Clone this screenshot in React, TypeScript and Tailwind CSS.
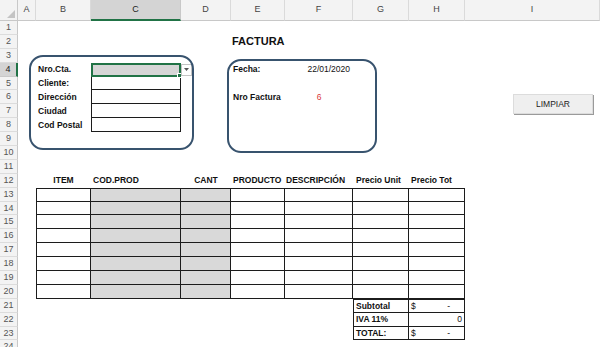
import React from 'react';

const COLS = ['A', 'B', 'C', 'D', 'E', 'F', 'G', 'H', 'I'];
const GRID = 'grid grid-cols-[18px_18px_55px_90px_50px_54px_68px_56px_56px_1fr]';

type Cell = { t?: React.ReactNode; c?: string };
type Row = Partial<Record<string, Cell>>;

const line = 'border-[#1c1c1c]';
const box = `border-r border-b ${line}`;
const gray = 'bg-[#d9d9d9]';

const sheet: Record<number, Row> = {
  2: { E: { t: 'FACTURA', c: 'text-[11px] font-bold pl-[1px]' } },
  4: {
    B: { t: 'Nro.Cta.', c: 'font-bold pl-[2px]' },
    E: { t: 'Fecha:', c: 'font-bold pl-[2px]' },
    F: { t: '22/01/2020', c: 'justify-end pr-[3px]' },
  },
  5: { B: { t: 'Cliente:', c: 'font-bold pl-[2px]' }, C: { c: `border-l ${box}` } },
  6: {
    B: { t: 'Dirección', c: 'font-bold pl-[2px]' },
    C: { c: `border-l ${box}` },
    E: { t: 'Nro Factura', c: 'font-bold pl-[2px]' },
    F: { t: '6', c: 'justify-center text-[#d9383a]' },
  },
  7: { B: { t: 'Ciudad', c: 'font-bold pl-[2px]' }, C: { c: `border-l ${box}` } },
  8: { B: { t: 'Cod Postal', c: 'font-bold pl-[2px]' }, C: { c: `border-l ${box}` } },
  12: {
    B: { t: 'ITEM', c: 'font-bold justify-center' },
    C: { t: 'COD.PROD', c: 'font-bold pl-[2px]' },
    D: { t: 'CANT', c: 'font-bold justify-center' },
    E: { t: 'PRODUCTO', c: 'font-bold pl-[2px]' },
    F: { t: 'DESCRIPCIÓN', c: 'font-bold pl-[1px]' },
    G: { t: 'Precio Unit', c: 'font-bold pl-[3px]' },
    H: { t: 'Precio Tot', c: 'font-bold pl-[2px]' },
  },
  21: {
    G: { t: 'Subtotal', c: `font-bold pl-[2px] border-l border-t ${box}` },
    H: { t: <><span>$</span><span className="pr-[14px]">-</span></>, c: `justify-between pl-[2px] border-t ${box}` },
  },
  22: {
    G: { t: 'IVA 11%', c: `font-bold pl-[2px] border-l ${box}` },
    H: { t: '0', c: `justify-end pr-[2px] ${box}` },
  },
  23: {
    G: { t: 'TOTAL:', c: `font-bold pl-[2px] border-l ${box}` },
    H: { t: <><span>$</span><span className="pr-[14px]">-</span></>, c: `justify-between pl-[2px] ${box}` },
  },
};

// product table rows 13-20
for (let r = 13; r <= 20; r++) {
  const top = r === 13 ? 'border-t' : '';
  sheet[r] = {
    B: { c: `border-l ${top} ${box}` },
    C: { c: `${top} ${box} ${gray}` },
    D: { c: `${top} ${box} ${gray}` },
    E: { c: `${top} ${box}` },
    F: { c: `${top} ${box}` },
    G: { c: `${top} ${box}` },
    H: { c: `${top} ${box}` },
  };
}

const SelectedCell: React.FC = () => (
  <div className="relative h-full border-2 border-[#217346] bg-[#d6d6d6]">
    <div className="absolute -right-[3px] -bottom-[3px] w-[5px] h-[5px] bg-[#217346] border border-white" />
    <div className="absolute -right-[13px] -top-[1px] w-[11px] h-[12px] bg-white border border-[#c4c4c4] flex items-center justify-center">
      <svg width="5" height="3" viewBox="0 0 5 3"><path d="M0 0h5L2.5 3z" fill="#555" /></svg>
    </div>
  </div>
);

export default function App() {
  const rows = Array.from({ length: 24 }, (_, i) => i + 1);
  return (
    <div className="relative w-[600px] h-[347px] overflow-hidden bg-white text-[#111] font-['Liberation_Sans',Arial,sans-serif]">
      {/* column headers */}
      <div className={`${GRID} h-[21px] bg-[#f3f3f3] text-[9px] text-[#444]`}>
        <div className="relative border-r border-b border-[#c8c8c8]">
          <svg className="absolute right-[2px] bottom-[2px]" width="8" height="8" viewBox="0 0 8 8">
            <path d="M8 0V8H0z" fill="#c4c4c4" />
          </svg>
        </div>
        {COLS.map((c) => (
          <div
            key={c}
            className={
              c === 'C'
                ? 'flex items-center justify-center bg-[#d4d4d4] border-r border-[#c8c8c8] border-b-2 border-b-[#217346] text-[#222]'
                : 'flex items-center justify-center border-r border-[#dadada] border-b border-b-[#c8c8c8]'
            }
          >
            {c}
          </div>
        ))}
      </div>

      {rows.map((r) => (
        <div key={r} className={`${GRID} h-[13.9px] text-[8.5px] leading-none`}>
          <div
            className={
              r === 4
                ? 'flex items-center justify-center bg-[#d4d4d4] border-r-2 border-r-[#217346] border-b border-[#c8c8c8] text-[9px] text-[#222]'
                : 'flex items-center justify-center bg-[#f3f3f3] border-r border-[#c8c8c8] border-b border-b-[#dcdcdc] text-[9px] text-[#555]'
            }
          >
            {r}
          </div>
          {COLS.map((c) => {
            if (r === 4 && c === 'C') return <SelectedCell key={c} />;
            const cell = sheet[r]?.[c];
            return (
              <div key={c} className={`flex items-center whitespace-nowrap ${cell?.c ?? ''}`}>
                {cell?.t}
              </div>
            );
          })}
        </div>
      ))}

      {/* floating shapes drawn over the sheet */}
      <div className="absolute left-[29px] top-[55px] w-[165px] h-[95px] rounded-[14px] border-2 border-[#38536e] pointer-events-none" />
      <div className="absolute left-[227px] top-[59px] w-[150px] h-[94px] rounded-[14px] border-2 border-[#38536e] pointer-events-none" />
      <button className="absolute left-[513px] top-[94px] w-[80px] h-[20px] bg-[#efefef] border border-[#dcdcdc] shadow-[1px_1px_0_#9a9a9a] text-[8.5px] text-[#222] font-['Liberation_Sans',Arial,sans-serif]">
        LIMPIAR
      </button>
    </div>
  );
}
